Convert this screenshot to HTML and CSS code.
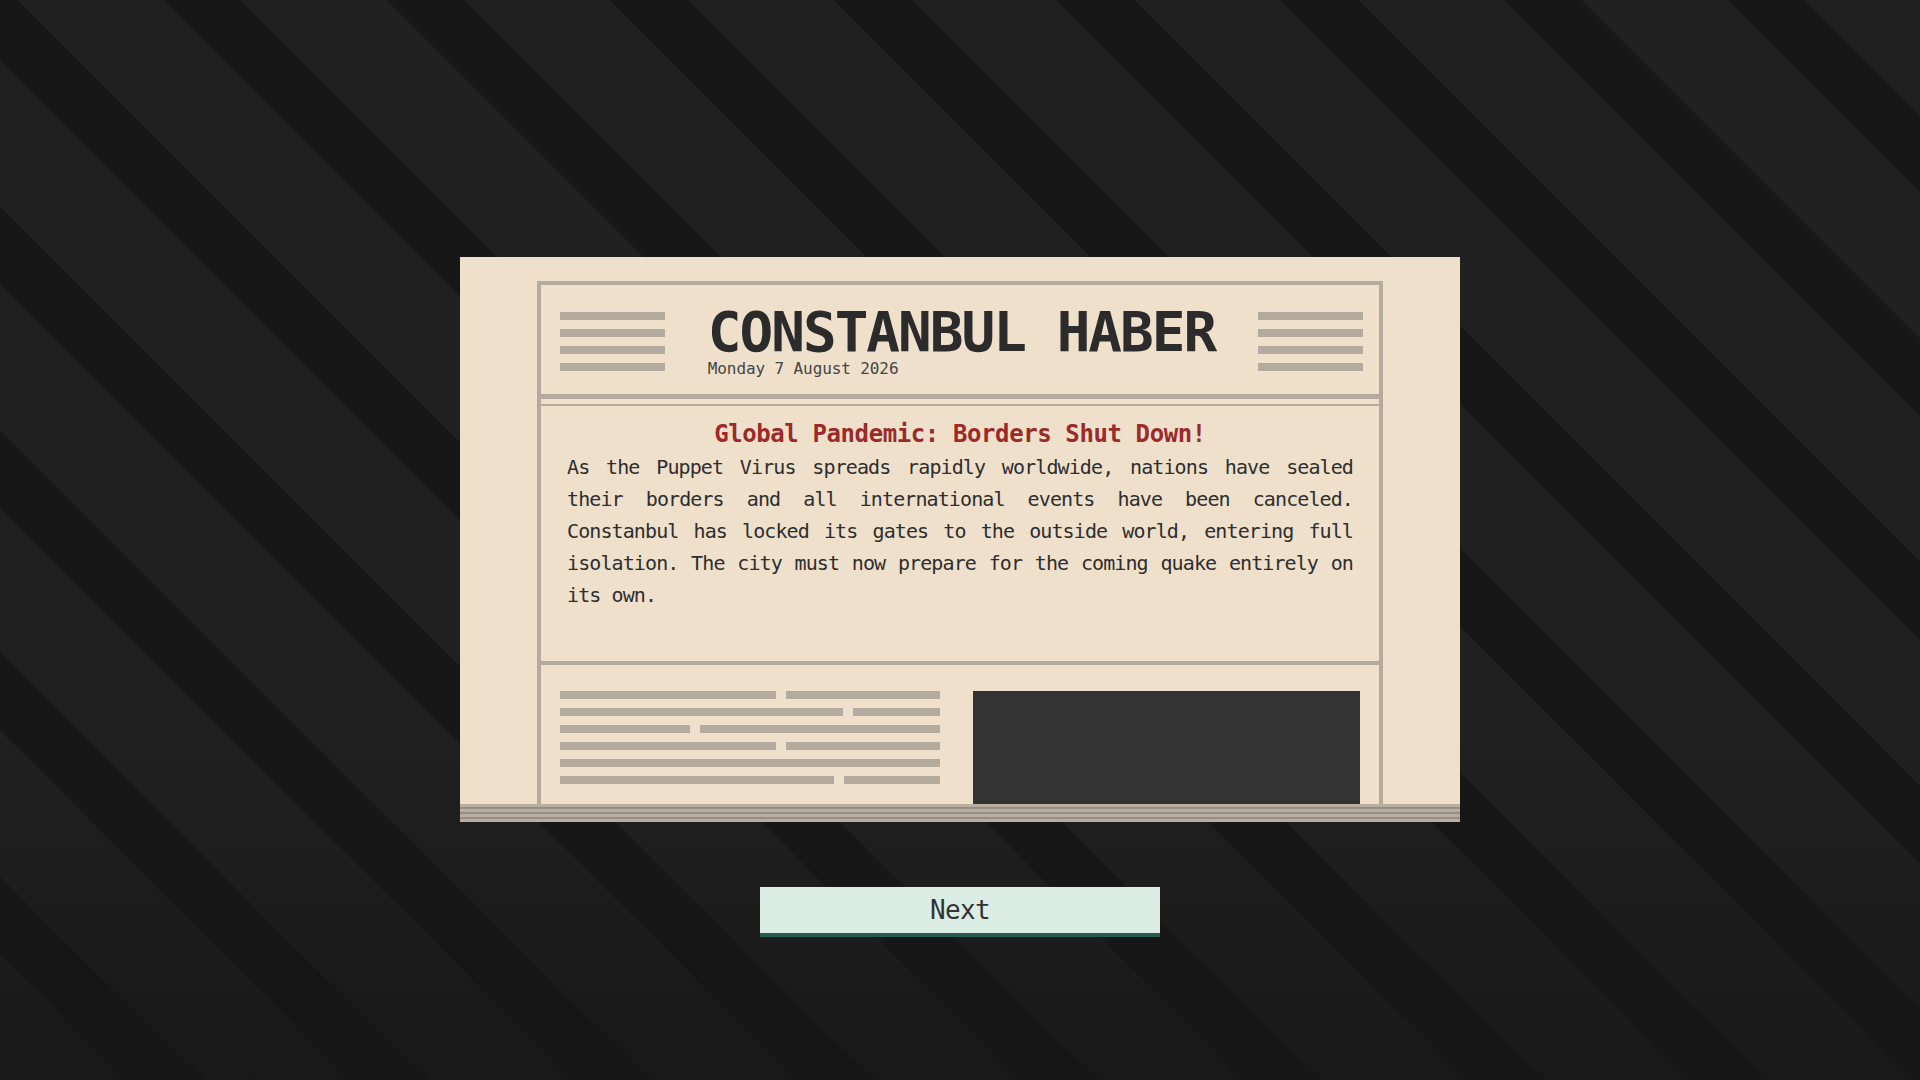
FILE: index.html
```html
<!DOCTYPE html>
<html lang="en">
<head>
    <meta charset="UTF-8">
    <meta name="viewport" content="width=device-width, initial-scale=1.0">
    <title>Constanbul Haber</title>
    <link rel="stylesheet" href="styles.css">
</head>
<body>
    <div class="screen">
        <div class="newspaper">
            <div class="sheet">
                <div class="frame">
                    <!-- masthead -->
                    <header class="masthead">
                        <div class="rule-lines">
                            <span></span><span></span><span></span><span></span>
                        </div>
                        <div class="title-block">
                            <h1 class="paper-name">CONSTANBUL HABER</h1>
                            <div class="issue-date">Monday 7 August 2026</div>
                        </div>
                        <div class="rule-lines">
                            <span></span><span></span><span></span><span></span>
                        </div>
                    </header>

                    <!-- main story -->
                    <section class="story">
                        <h2 class="headline">Global Pandemic: Borders Shut Down!</h2>
                        <p class="story-text">As the Puppet Virus spreads rapidly worldwide, nations have sealed their borders and all international events have been canceled. Constanbul has locked its gates to the outside world, entering full isolation. The city must now prepare for the coming quake entirely on its own.</p>
                    </section>

                    <!-- placeholder columns below the fold -->
                    <section class="filler">
                        <div class="filler-text">
                            <div class="filler-row"><span style="width: 216px"></span><span></span></div>
                            <div class="filler-row"><span style="width: 283px"></span><span></span></div>
                            <div class="filler-row"><span style="width: 130px"></span><span></span></div>
                            <div class="filler-row"><span style="width: 216px"></span><span></span></div>
                            <div class="filler-row"><span></span></div>
                            <div class="filler-row"><span style="width: 274px"></span><span></span></div>
                        </div>
                        <div class="photo"></div>
                    </section>
                </div>
            </div>
            <div class="paper-edge"></div>
        </div>

        <button class="next-btn">Next</button>
    </div>
</body>
</html>
```

FILE: styles.css
```css
html,
body {
    height: 100%;
}

body {
    margin: 0;
    font-family: 'DejaVu Sans Mono', 'Liberation Mono', monospace;
    color: #2e2e2e;
    background:
        linear-gradient(to bottom, rgba(22, 22, 22, 0) 68%, rgba(22, 22, 22, 0.75) 100%),
        repeating-linear-gradient(45deg, #202020 0 89px, #171717 89px 144px, #202020 144px 158px);
}

.screen {
    display: flex;
    flex-direction: column;
    align-items: center;
    padding-top: 257px;
}

.newspaper {
    width: 1000px;
}

.sheet {
    height: 547px;
    padding: 24px 77px 0;
    background: #efe0cc;
    overflow: hidden;
    box-sizing: border-box;
}

.frame {
    border: 4px solid #b4aa9d;
    border-bottom: none;
}

.masthead {
    display: grid;
    grid-template-columns: 105px 1fr 105px;
    align-items: center;
    padding: 20px 16px 17px 19px;
    border-bottom: 5px solid #b4aa9d;
}

.rule-lines {
    display: flex;
    flex-direction: column;
    gap: 9px;
}

.rule-lines span {
    display: block;
    height: 8px;
    background: #b4aa9d;
}

.title-block {
    justify-self: center;
}

.paper-name {
    margin: 0;
    font-size: 56px;
    line-height: 54px;
    font-weight: 700;
    letter-spacing: -2px;
    color: #2b2b2b;
    white-space: nowrap;
}

.issue-date {
    margin-top: 2px;
    font-size: 16px;
    line-height: 16px;
    letter-spacing: -0.1px;
    color: #444;
}

.story {
    margin-top: 5px;
    padding: 14px 26px 50px;
    border-top: 2px solid #b4aa9d;
    border-bottom: 4px solid #b4aa9d;
}

.headline {
    margin: 0;
    font-size: 24px;
    line-height: 28px;
    font-weight: 700;
    letter-spacing: -0.4px;
    text-align: center;
    color: #9b2a2a;
}

.story-text {
    margin: 3px 0 0;
    font-size: 20px;
    line-height: 32px;
    letter-spacing: -0.9px;
    text-align: justify;
    color: #2e2e2e;
}

.filler {
    display: grid;
    grid-template-columns: 380px 1fr;
    gap: 33px;
    padding: 26px 19px 0;
}

.filler-text {
    display: flex;
    flex-direction: column;
    gap: 9px;
}

.filler-row {
    display: flex;
    gap: 10px;
}

.filler-row span {
    height: 8px;
    background: #b4aa9d;
}

.filler-row span:last-child {
    flex: 1;
}

.photo {
    height: 140px;
    background: #333;
}

.paper-edge {
    height: 18px;
    background: repeating-linear-gradient(to bottom, #b9ae9f 0 3px, #958e85 3px 5px);
}

.next-btn {
    width: 400px;
    height: 50px;
    margin-top: 65px;
    padding: 0;
    border: none;
    border-bottom: 4px solid #2b5b50;
    background: #dcede5;
    font-family: 'DejaVu Sans Mono', 'Liberation Mono', monospace;
    font-size: 26px;
    letter-spacing: -0.6px;
    color: #333;
    cursor: pointer;
}
```
